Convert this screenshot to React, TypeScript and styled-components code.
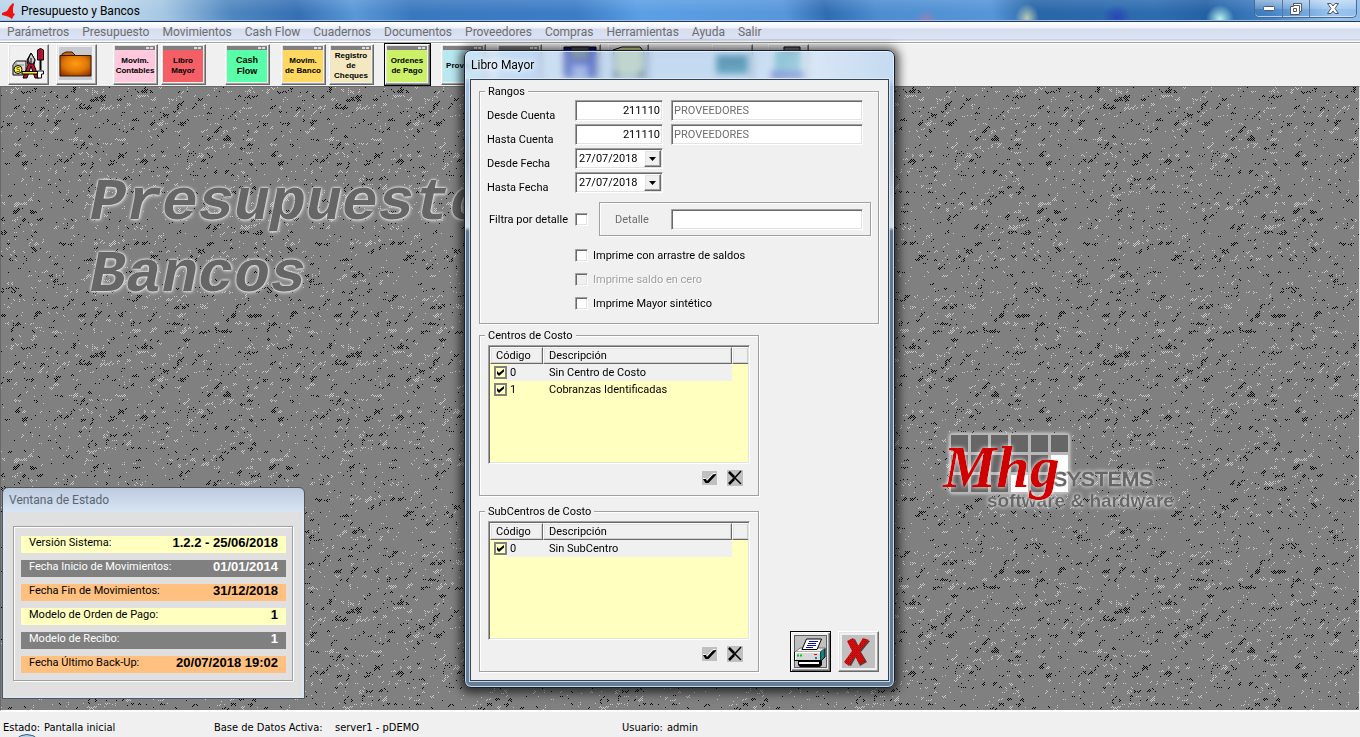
import React, { useMemo } from "react";
import styled, { createGlobalStyle, css } from "styled-components";

const SANS = '"Liberation Sans", Arial, sans-serif';
const FORM = 'Roboto, "Liberation Sans", sans-serif';
const UI = 'Roboto, "Open Sans", sans-serif';
const STATUS = '"DejaVu Sans Condensed", "DejaVu Sans", sans-serif';

const GlobalStyle = createGlobalStyle`
  *, *::before, *::after { box-sizing: border-box; }
  html, body { margin: 0; padding: 0; background: #f0f0f0; }
  body { font: 11px/13px ${FORM}; color: #000; overflow: hidden; }
  button, input, select { font: inherit; color: inherit; margin: 0; }
`;

/* ---------- Main window ---------- */

const Screen = styled.div`
  position: relative;
  display: flex;
  flex-direction: column;
  height: 100vh;
  overflow: hidden;
`;

const TitleBar = styled.header`
  display: flex;
  align-items: flex-start;
  justify-content: space-between;
  height: 22px;
  border-bottom: 1px solid #24395a;
  box-shadow: inset 0 -1px #9cc0e6;
  background:
    radial-gradient(ellipse 12px 12px at 926px 22px, #a080b0, transparent),
    radial-gradient(ellipse 12px 14px at 1027px 18px, #b9c9b4, transparent),
    radial-gradient(ellipse 14px 12px at 1117px 17px, #2a45b5, transparent),
    radial-gradient(ellipse 14px 14px at 1220px 19px, #baf5f0, transparent),
    linear-gradient(180deg, rgba(255, 255, 255, 0.12), transparent 60%),
    linear-gradient(75deg, #b7d3ea 0, #cfe1f0 80px, #a5c7e3 160px, #4f87c0 225px, #3670b4 290px, #5a98d8 345px,
      #3a78be 400px, #3d7dc6 560px, #5b9fe4 620px, #5796da 760px, #2f6cb2 800px, #4d8dd0 850px, #5595d8 960px,
      #2866a8 1000px, #2e6cb0 1120px, #2360a4 1170px, #4484c6 1230px, #9cc6f0 1290px, #8cbaea 100%);
`;

const AppTitle = styled.h1`
  display: flex;
  align-items: center;
  gap: 5px;
  margin: 0;
  padding-left: 2px;
  height: 22px;
  font: 400 12px/22px ${UI};
`;

const WindowButtons = styled.div`
  display: flex;
  margin-right: 3px;
  border: 1px solid #49698f;
  border-top: 0;
  border-radius: 0 0 5px 5px;
  box-shadow: inset 0 -1px rgba(255, 255, 255, 0.6);
  overflow: hidden;
`;

const WindowButton = styled.button<{ $wide?: boolean }>`
  display: flex;
  align-items: center;
  justify-content: center;
  width: ${(p) => (p.$wide ? 47 : 27)}px;
  height: 17px;
  padding: 0;
  border: 0;
  background: linear-gradient(rgba(255, 255, 255, 0.4), rgba(255, 255, 255, 0.15) 50%, transparent 51%);
  & + & { border-left: 1px solid #5577a0; }
`;

const MenuBar = styled.nav`
  display: flex;
  gap: 13px;
  height: 21px;
  padding-left: 7px;
  border-bottom: 1px solid #a0a0a0;
  background: linear-gradient(#fff 0, #eef2f9 6px, #d5dcee 7px, #dde4f5 17px, #b5bdd2 18px, #fff 19px);
`;

const MenuItem = styled.button`
  height: 20px;
  padding: 0;
  border: 0;
  background: none;
  color: #6d6d6d;
  font: 12px/20px ${UI};
`;

const ToolBar = styled.div`
  display: flex;
  align-items: flex-start;
  height: 43px;
  padding: 0 0 0 8px;
  border-top: 1px solid #fff;
  background: #f0f0f0;
`;

const raised = css`
  border: 1px solid;
  border-color: #fff #696969 #696969 #fff;
  box-shadow: inset -1px -1px #a0a0a0, inset 1px 1px #e3e3e3;
`;

const ToolButton = styled.button<{ $gap?: number; $wide?: boolean; $focused?: boolean }>`
  display: flex;
  flex: none;
  align-items: stretch;
  width: ${(p) => (p.$wide ? 45 : 41)}px;
  height: 41px;
  margin-left: ${(p) => p.$gap ?? 0}px;
  padding: 1px 2px 2px 1px;
  background: #f0f0f0;
  ${raised}
  ${(p) => p.$focused && css`outline: 1px solid #000; outline-offset: 0;`}
`;

const MiniWindow = styled.span<{ $color: string; $large?: boolean }>`
  display: flex;
  flex: 1;
  flex-direction: column;
  background: ${(p) => p.$color};
  font: 700 ${(p) => (p.$large ? "9px/11px" : "8px/10px")} ${SANS};
  text-align: center;
  white-space: pre-line;
  > span { margin: auto -4px; }
`;

const MiniBar = styled.i`
  display: flex;
  justify-content: flex-end;
  gap: 1px;
  height: 4px;
  padding: 1px 2px;
  background: #808080;
  &::before, &::after { content: ""; width: 3px; height: 2px; background: #ddd; }
`;

const Workspace = styled.main`
  position: relative;
  flex: 1;
  min-height: 0;
  border: 1px solid #696969;
  border-right-color: #e3e3e3;
  border-bottom-color: #fff;
  background: #808080;
  overflow: hidden;
`;

const Texture = styled.svg`
  position: absolute;
  inset: 0;
  width: 100%;
  height: 100%;
`;

const Watermark = styled.p`
  position: absolute;
  left: 89px;
  top: 80px;
  margin: 0;
  color: #666;
  font: italic 700 60px/72px "Liberation Mono", monospace;
  white-space: pre-line;
  text-shadow: 0 0 2px #fff, 0 0 3px #e0e0e0, 1px 1px 4px #d0d0d0;
`;

const BrandLogo = styled.svg`
  position: absolute;
  right: 178px;
  top: 330px;
  width: 244px;
  height: 100px;
  overflow: visible;
`;

const StatusBar = styled.footer`
  position: relative;
  display: flex;
  height: 26px;
  padding: 0 3px;
  border-top: 1px solid #fff;
  background: #f0f0f0;
  font: 11px/31px ${STATUS};
  overflow: hidden;
`;

const StatusItem = styled.dl<{ $width: number; $term?: number }>`
  display: flex;
  width: ${(p) => p.$width}px;
  margin: 0;
  dt { width: ${(p) => (p.$term ? p.$term + "px" : "auto")}; padding-right: 4px; white-space: nowrap; }
  dd { margin: 0; white-space: nowrap; }
`;

const StartOrb = styled.span`
  position: absolute;
  left: 11px;
  top: 22px;
  width: 32px;
  height: 32px;
  border: 1px solid #2c5a82;
  border-radius: 50%;
  background: #b5d2e6;
`;

/* ---------- Status window ---------- */

const StateWindow = styled.section`
  position: absolute;
  left: 2px;
  bottom: 38px;
  width: 303px;
  padding: 0 2px 2px;
  border: 1px solid #50555c;
  border-radius: 6px 6px 0 0;
  background: linear-gradient(#bccbde, #d9e7f6 26px, #dbe6f3);
`;

const StateTitle = styled.h2`
  margin: 0;
  padding-left: 4px;
  color: #5c6470;
  font: 400 12px/24px ${UI};
`;

const StateBody = styled.div`
  padding: 14px 9px 15px 8px;
  background: #e0e0e0;
`;

const StateList = styled.dl`
  display: flex;
  flex-direction: column;
  gap: 7px;
  margin: 0;
  padding: 9px 6px 7px 7px;
  border: 1px solid #a0a0a0;
  box-shadow: inset 1px 1px #fff, 1px 1px #fff;
`;

const StateRow = styled.div<{ $color: string; $inverse?: boolean }>`
  display: flex;
  justify-content: space-between;
  height: 17px;
  padding: 0 8px;
  background: ${(p) => p.$color};
  color: ${(p) => (p.$inverse ? "#fff" : "#000")};
  dt { line-height: 14px; }
  dd { margin: 0; font: 700 13px/14px ${SANS}; }
`;

/* ---------- Dialog ---------- */

const Dialog = styled.section`
  position: absolute;
  left: 464px;
  top: 50px;
  width: 431px;
  padding: 0 5px 6px;
  border: 1px solid #17202c;
  border-radius: 7px;
  background:
    linear-gradient(100deg, rgba(255, 255, 255, 0.35), transparent 30%, transparent 65%, rgba(255, 255, 255, 0.35) 80%, transparent) 0 0 / 100% 28px no-repeat,
    linear-gradient(rgba(160, 198, 240, 0.55) 0, rgba(168, 204, 242, 0.6) 28px, #a9c4e0 40px, #a8b4c2 110px, #d3dae2 176px, #607890 180px, #667f99);
  backdrop-filter: blur(3px);
  box-shadow: inset 0 0 0 1px rgba(235, 245, 255, 0.75), 0 1px 10px 4px rgba(0, 0, 0, 0.65);
`;

const DialogTitle = styled.h2`
  margin: 0;
  padding-left: 1px;
  font: 400 12px/28px ${UI};
  text-shadow: 0 0 6px #fff, 0 0 6px #fff;
`;

const DialogBody = styled.form`
  display: flex;
  flex-direction: column;
  padding: 5px 9px 8px 8px;
  border: 1px solid #36424f;
  outline: 1px solid rgba(225, 238, 250, 0.8);
  background: #f0f0f0;
`;

const Group = styled.fieldset<{ $narrow?: boolean; $after?: number }>`
  width: ${(p) => (p.$narrow ? "280px" : "auto")};
  min-width: 0;
  margin: 0 0 ${(p) => p.$after ?? 0}px;
  padding: ${(p) => (p.$narrow ? "3px 8px 9px" : "2px 7px 8px")};
  border: 1px solid #a0a0a0;
  box-shadow: 1px 1px #fff, inset 1px 1px #fff;
`;

const Legend = styled.legend<{ $indent?: number }>`
  margin-left: ${(p) => p.$indent ?? 0}px;
  padding: 0 3px;
  background: #f0f0f0;
`;

const FieldRow = styled.div`
  display: grid;
  grid-template-columns: 88px auto;
  justify-content: start;
  height: 24px;
  > label { padding-top: 9px; }
`;

const sunken = css`
  border: 1px solid;
  border-color: #a0a0a0 #fff #fff #a0a0a0;
  box-shadow: inset 1px 1px #696969, inset -1px -1px #e3e3e3;
  border-radius: 0;
`;

const AccountFields = styled.div`
  display: flex;
  gap: 8px;
`;

const TextBox = styled.input<{ $size: "code" | "name" }>`
  flex: none;
  width: ${(p) => (p.$size === "code" ? 88 : 192)}px;
  height: 21px;
  padding: 0 2px;
  ${sunken}
  outline: 0;
  background: #fff;
  text-align: ${(p) => (p.$size === "code" ? "right" : "left")};
  &:disabled { color: #6d6d6d; }
`;

const DateField = styled.div`
  display: grid;
  width: 88px;
  height: 21px;
  > * { grid-area: 1 / 1; }
`;

const DateSelect = styled.select`
  appearance: none;
  width: 100%;
  height: 100%;
  padding: 0 3px;
  ${sunken}
  outline: 0;
  background: #fff;
`;

const DropArrow = styled.span`
  z-index: 1;
  display: flex;
  align-items: center;
  justify-content: center;
  justify-self: end;
  width: 17px;
  height: 17px;
  margin: 2px;
  background: #f0f0f0;
  pointer-events: none;
  ${raised}
`;

const DetailRow = styled.div`
  display: grid;
  grid-template-columns: 88px 24px 272px;
  align-items: center;
  margin: 6px 0 7px;
  > label { padding-left: 2px; }
`;

const DetailFrame = styled.div`
  display: flex;
  align-items: center;
  justify-content: space-between;
  height: 34px;
  padding: 0 7px 0 15px;
  border: 1px solid #a0a0a0;
  box-shadow: 1px 1px #fff, inset 1px 1px #fff;
  color: #6d6d6d;
`;

const CheckBox = styled.input<{ $flat?: boolean }>`
  appearance: none;
  display: grid;
  flex: none;
  width: 13px;
  height: 13px;
  place-items: center;
  background: #fff;
  ${sunken}
  ${(p) => p.$flat && css`border: 2px solid #808080; box-shadow: none; background: none;`}
  &:disabled { background: #f0f0f0; }
  &:checked::after {
    content: "";
    width: 7px;
    height: 7px;
    background: #000;
    clip-path: polygon(0 29%, 29% 58%, 100% 0, 100% 36%, 29% 100%, 0 70%);
  }
`;

const OptionLabel = styled.label<{ $disabled?: boolean }>`
  display: flex;
  align-items: center;
  gap: 5px;
  height: 24px;
  margin-left: 88px;
  ${(p) => p.$disabled && css`color: #a0a0a0; text-shadow: 1px 1px #fff;`}
`;

const ListBox = styled.div`
  height: 119px;
  padding: 1px;
  ${sunken}
  background: #ffffc0;
`;

const ListTable = styled.table`
  width: 100%;
  border-collapse: separate;
  border-spacing: 0;
  table-layout: fixed;
  th {
    height: 17px;
    padding: 0 5px;
    border: 1px solid;
    border-color: #fff #696969 #696969 #fff;
    box-shadow: inset -1px -1px #d0d0d0, inset 1px 1px #e3e3e3;
    background: #f0f0f0;
    font-weight: 400;
    text-align: left;
  }
  th:last-child { border-right: 0; }
  td { height: 17px; padding: 0 6px; white-space: nowrap; }
  td:first-child { padding: 0 0 0 4px; }
`;

const ListRow = styled.tr<{ $selected?: boolean }>`
  ${(p) => p.$selected && css`
    td:first-child { background: linear-gradient(90deg, transparent 17px, #f0f0f0 17px); }
    td:nth-child(2) { background: #f0f0f0; }
  `}
`;

const CodeLabel = styled.label`
  display: flex;
  align-items: center;
  gap: 3px;
`;

const ListActions = styled.div`
  display: flex;
  justify-content: flex-end;
  gap: 9px;
  margin: 6px 7px 0 0;
`;

const GlyphButton = styled.button`
  display: block;
  width: 16px;
  height: 16px;
  padding: 0;
  border: 0;
  background: none;
  svg { display: block; }
`;

const BottomRow = styled.div`
  display: flex;
  align-items: flex-end;
  justify-content: space-between;
`;

const DialogActions = styled.div`
  display: flex;
  gap: 7px;
`;

const ActionButton = styled.button<{ $default?: boolean }>`
  display: flex;
  align-items: center;
  justify-content: center;
  width: 41px;
  height: 41px;
  padding: 0;
  background: #f0f0f0;
  ${raised}
  ${(p) => p.$default && css`border-color: #000; box-shadow: inset 1px 1px #fff, inset -1px -1px #696969, inset -2px -2px #a0a0a0;`}
  svg { flex: none; }
`;

/* ---------- Drawings ---------- */

const TILE = 256;

/** Embossed noise: lit pixels on the upper edge of each bump, black ones on the lower edge. */
function buildGrain() {
  let seed = 20180727;
  const rnd = () => {
    seed = (seed * 1664525 + 1013904223) >>> 0;
    return seed / 4294967296;
  };
  const make = (cell: number) => {
    const n = TILE / cell;
    const grid = Array.from({ length: n * n }, rnd);
    const ease = (t: number) => t * t * (3 - 2 * t);
    return (x: number, y: number) => {
      const gx = ((x + TILE) % TILE) / cell;
      const gy = ((y + TILE) % TILE) / cell;
      const x0 = Math.floor(gx), y0 = Math.floor(gy);
      const fx = ease(gx - x0), fy = ease(gy - y0);
      const at = (i: number, j: number) => grid[(j % n) * n + (i % n)];
      return (at(x0, y0) * (1 - fx) + at(x0 + 1, y0) * fx) * (1 - fy)
        + (at(x0, y0 + 1) * (1 - fx) + at(x0 + 1, y0 + 1) * fx) * fy;
    };
  };
  const coarse = make(8);
  const fine = make(4);
  const height = (x: number, y: number) => coarse(x, y) * 0.9 + fine(x + 2, y + 1) * 0.6;
  let light = "";
  let dark = "";
  for (let y = 0; y < TILE; y++) {
    for (let x = y % 2; x < TILE; x += 2) {
      const slope = height(x, y + 2) - height(x, y - 1)
        + (height(x + 1, y) - height(x - 1, y)) * 0.5 + (rnd() - 0.5) * 0.4;
      if (slope > 0.39) light += `M${x} ${y}h1v1h-1z`;
      else if (slope < -0.39) dark += `M${x} ${y}h1v1h-1z`;
    }
  }
  return { light, dark };
}

const Grain = () => {
  const { light, dark } = useMemo(buildGrain, []);
  return (
    <Texture aria-hidden="true" shapeRendering="crispEdges">
      <defs>
        <pattern id="grain" width={TILE} height={TILE} patternUnits="userSpaceOnUse">
          <path d={light} fill="#c8c8c8" />
          <path d={dark} fill="#000" />
        </pattern>
      </defs>
      <rect width="100%" height="100%" fill="url(#grain)" />
    </Texture>
  );
};

const BirdIcon = () => (
  <svg width="14" height="16" viewBox="0 0 14 16" aria-hidden="true">
    <path d="M11 0 12 1 11 5 11 10 13 11 11 14 10 16 7 14 4 13 0 12V10L5 8 8 3z" fill="#f01010" />
  </svg>
);

const ToolsIcon = () => (
  <svg width="36" height="36" viewBox="0 0 36 36" aria-hidden="true">
    <path d="M3 19 6 15h10v10l-2 4H3z" fill="#ddd" stroke="#000" />
    <path d="M6 15v4h-3M6 19h8" stroke="#888" fill="none" />
    <circle cx="8" cy="23.500" r="4" fill="#ff4" stroke="#000" />
    <path d="M9.500 21.500H7v2h2.500v2H6.500" stroke="#806000" fill="none" />
    <path d="M21 7 17 14l1 5-5 13h4l4-12 4 12h4l-5-13 1-5z" fill="#c01030" stroke="#000" />
    <path d="M21 7 18 14l2 4h3l2-4zM21 12v6" fill="#ccc" stroke="#000" />
    <path d="M12 25.500h18v2.500H12z" fill="#ee4" stroke="#000" />
    <path d="M27.500 4q3-3 6 0v10h-6z" fill="#d01020" stroke="#000" />
    <path d="M30 4v9" stroke="#402090" />
    <path d="M30.500 14v10" stroke="#000" strokeWidth="2" />
    <path d="M27.500 25h6v3h-2v4h-4z" fill="#fff" stroke="#000" />
  </svg>
);

const FolderIcon = () => (
  <svg width="36" height="36" viewBox="0 0 36 36" aria-hidden="true">
    <defs>
      <radialGradient id="folderFill" cx="0.5" cy="0.4" r="0.75">
        <stop offset="0" stopColor="#ff9c10" />
        <stop offset="0.5" stopColor="#e07808" />
        <stop offset="1" stopColor="#802800" />
      </radialGradient>
    </defs>
    <rect x="1" y="1" width="33" height="33" fill="#c8c8d0" />
    <path d="M4 10V8l4-2h6l3 3v2z" fill="#c06810" stroke="#3a1800" />
    <path d="M2 9.500h31v20.500H2z" fill="url(#folderFill)" stroke="#3a1800" />
  </svg>
);

const DiskIcon = ({ color }: { color: string }) => (
  <svg width="36" height="36" viewBox="0 0 36 36" aria-hidden="true">
    <path d="M2 1h32v31H5l-3-3z" fill={color} stroke="#000" />
    <path d="M9 1h18v12H9z" fill="#555" stroke="#111" />
    <path d="M10 19h16v13H10z" fill="#99c" />
  </svg>
);

const NoteIcon = () => (
  <svg width="36" height="36" viewBox="0 0 36 36" aria-hidden="true">
    <path d="M3 4 12 1h18l4 5v24H6z" fill="#e6e6a0" stroke="#000" />
    <path d="M3 24 10 32H3zM26 32l8-9v9z" fill="#222" />
  </svg>
);

const CardIcon = () => (
  <svg width="36" height="36" viewBox="0 0 36 36" aria-hidden="true">
    <path d="M2 9h32v19H2z" fill="#0f6f78" />
    <path d="M6 13h24v4H6z" fill="#0a4a56" />
  </svg>
);

const MachineIcon = () => (
  <svg width="36" height="36" viewBox="0 0 36 36" aria-hidden="true">
    <path d="M14 1h16v5H14z" fill="#777" stroke="#000" />
    <path d="M5 6h26v20H5z" fill="#3fa0a4" />
    <path d="M1 25h33v9H1z" fill="#2028a0" />
  </svg>
);

const TickGlyph = () => (
  <svg width="15" height="14" viewBox="0 0 15 14" aria-hidden="true">
    <rect width="15" height="14" fill="#c0c0c0" />
    <path d="M1 7.500h2.500l1.500 2L11 2.500h2.500" fill="none" stroke="#fff" />
    <path d="M1 8h3l1 2 6-6.500 3-.5v1L6.500 12H3.500z" fill="#000" />
  </svg>
);

const CrossGlyph = () => (
  <svg width="16" height="16" viewBox="0 0 16 16" aria-hidden="true">
    <rect width="16" height="16" fill="#c0c0c0" />
    <path d="M2 2 14 14M14 1 4 12" stroke="#000" strokeWidth="1.500" fill="none" />
    <path d="M2 2l5 5M7 9l-5 5" stroke="#000" strokeWidth="2.500" />
  </svg>
);

const PrinterIcon = () => (
  <svg width="35" height="35" viewBox="0 0 35 35" aria-hidden="true">
    <rect x="1" y="1" width="33" height="33" fill="#c0c0c0" />
    <rect x="1.500" y="1.500" width="32" height="32" fill="none" stroke="#000" strokeDasharray="1 1" />
    <path d="M5 27h24v4l-2 2H7l-2-2z" fill="#000" />
    <path d="M6 28h20v2H6z" fill="#fff" />
    <path d="M27 18 32 14v9l-4 4h-1z" fill="#108080" stroke="#000" />
    <path d="M2 18 7 14h25l-5 4z" fill="#f0f0f0" stroke="#777" />
    <path d="M2 18h25v8H2z" fill="#d8d8d8" />
    <path d="M2 18.500h25M2.500 18v8" stroke="#fff" />
    <path d="M1.500 18v8.500H27" stroke="#000" fill="none" />
    <path d="M9 15.500 13.500 5h15L24 15.500z" fill="#fff" stroke="#000" />
    <path d="M16 7.500h9M15 9.500h8M14 11.500h9M13 13.500h7" stroke="#1010a0" />
    <path d="M4 21.500h2M7 21.500h2" stroke="#0c0" strokeWidth="2" />
    <path d="M21 20.500h3" stroke="#f00" />
    <path d="M22 24h2" stroke="#088" strokeWidth="2" />
  </svg>
);

const CancelIcon = () => (
  <svg width="33" height="33" viewBox="0 0 33 33" aria-hidden="true">
    <defs>
      <pattern id="mesh" width="2" height="2" patternUnits="userSpaceOnUse">
        <rect width="2" height="2" fill="#f00808" />
        <rect width="1" height="1" fill="#801010" />
        <rect x="1" y="1" width="1" height="1" fill="#c01010" />
      </pattern>
    </defs>
    <rect width="33" height="33" fill="#c0c0c0" />
    <path d="M8 6 13 4 17 12 22 5 28 6 19 17 25 27 18 31 14 22 9 31 3 28 11 16z" fill="#444" />
    <path d="M5 6 11 3 16 11 21 3 27 5 18 16 24 27 17 29 13 21 7 31 2 27 10 16z" fill="url(#mesh)" />
  </svg>
);

const blocks: [number, number][] = [];
for (let r = 0; r < 3; r++) for (let c = 0; c < 6; c++) blocks.push([c, r]);
const whiteBlocks = ["5-1", "5-2", "3-2"];

const Logo = () => (
  <BrandLogo viewBox="0 0 244 100" role="img" aria-label="Mhg Systems software &amp; hardware">
    <defs>
      <filter id="halo" x="-10%" y="-10%" width="120%" height="120%">
        <feDropShadow dx="0" dy="0" stdDeviation="2" floodColor="#fff" floodOpacity="1" />
      </filter>
    </defs>
    <g filter="url(#halo)">
      <rect x="13" y="17" width="119" height="59" fill="#b8b8b8" />
      {blocks.map(([c, r]) => (
        <rect key={`${c}-${r}`} x={14 + c * 20} y={18 + r * 20} width="17" height="17"
          fill={whiteBlocks.includes(`${c}-${r}`) ? "#fff" : "#666"} />
      ))}
    </g>
    <g filter="url(#halo)" fill="#666" fontFamily={SANS}>
      <text x="116" y="69" fontSize="21" stroke="#666">SYSTEMS</text>
      <text x="50" y="90" fontSize="19" fontWeight="700">software &amp; hardware</text>
    </g>
    <g fill="#d00000" fontStyle="italic" fontWeight="700" fontFamily='"Liberation Serif", serif' filter="url(#halo)">
      <text x="6" y="70" fontSize="60">Mhg</text>
    </g>
  </BrandLogo>
);

/* ---------- Content ---------- */

const menus = ["Parámetros", "Presupuesto", "Movimientos", "Cash Flow", "Cuadernos", "Documentos",
  "Proveedores", "Compras", "Herramientas", "Ayuda", "Salir"];

const shortcuts = [
  { text: "Movim.\nContables", color: "#ffc8dc", gap: 16 },
  { text: "Libro\nMayor", color: "#f45f66", gap: 3 },
  { text: "Cash\nFlow", color: "#58ffa8", gap: 19, large: true },
  { text: "Movim.\nde Banco", color: "#ffd860", gap: 11 },
  { text: "Registro\nde\nCheques", color: "#f4e8c0", gap: 3 },
  { text: "Ordenes\nde Pago", color: "#ccf068", gap: 11, focused: true },
  { text: "Proveed.", color: "#b8e8f0", gap: 11 },
  { text: "", color: "#c8dcf0", gap: 11 },
];

const stateRows = [
  { label: "Versión Sistema:", value: "1.2.2 - 25/06/2018", color: "#ffffc0" },
  { label: "Fecha Inicio de Movimientos:", value: "01/01/2014", color: "#808080", inverse: true },
  { label: "Fecha Fin de Movimientos:", value: "31/12/2018", color: "#ffc080" },
  { label: "Modelo de Orden de Pago:", value: "1", color: "#ffffc0" },
  { label: "Modelo de Recibo:", value: "1", color: "#808080", inverse: true },
  { label: "Fecha Último Back-Up:", value: "20/07/2018 19:02", color: "#ffc080" },
];

const AccountRow = ({ id, label }: { id: string; label: string }) => (
  <FieldRow>
    <label htmlFor={id}>{label}</label>
    <AccountFields>
      <TextBox id={id} $size="code" defaultValue="211110" />
      <TextBox $size="name" defaultValue="PROVEEDORES" aria-label={`${label}, nombre`} disabled />
    </AccountFields>
  </FieldRow>
);

const DateRow = ({ id, label }: { id: string; label: string }) => (
  <FieldRow>
    <label htmlFor={id}>{label}</label>
    <DateField>
      <DateSelect id={id}><option>27/07/2018</option></DateSelect>
      <DropArrow>
        <svg width="7" height="4" viewBox="0 0 7 4" aria-hidden="true"><path d="M0 0h7L3.500 4z" /></svg>
      </DropArrow>
    </DateField>
  </FieldRow>
);

type Item = { code: string; name: string };

const CenterGroup = ({ title, items, after }: { title: string; items: Item[]; after?: number }) => (
  <Group $narrow $after={after}>
    <Legend $indent={-3}>{title}</Legend>
    <ListBox>
      <ListTable>
        <colgroup><col style={{ width: 53 }} /><col style={{ width: 189 }} /><col /></colgroup>
        <thead>
          <tr><th scope="col">Código</th><th scope="col">Descripción</th><th aria-hidden="true" /></tr>
        </thead>
        <tbody>
          {items.map((item, i) => (
            <ListRow key={item.code} $selected={i === 0}>
              <td><CodeLabel><CheckBox type="checkbox" $flat defaultChecked />{item.code}</CodeLabel></td>
              <td>{item.name}</td>
              <td />
            </ListRow>
          ))}
        </tbody>
      </ListTable>
    </ListBox>
    <ListActions>
      <GlyphButton type="button" aria-label="Marcar todos"><TickGlyph /></GlyphButton>
      <GlyphButton type="button" aria-label="Desmarcar todos"><CrossGlyph /></GlyphButton>
    </ListActions>
  </Group>
);

export default function App() {
  return (
    <Screen>
      <GlobalStyle />
      <TitleBar>
        <AppTitle><BirdIcon />Presupuesto y Bancos</AppTitle>
        <WindowButtons>
          <WindowButton aria-label="Minimizar">
            <svg width="12" height="5" viewBox="0 0 12 5"><rect x=".5" y=".5" width="11" height="4" rx="1" fill="#fff" stroke="#50586a" /></svg>
          </WindowButton>
          <WindowButton aria-label="Restaurar">
            <svg width="12" height="12" viewBox="0 0 12 12">
              <path d="M3.500.5h8v8h-2v3h-9v-8h3z" fill="#fff" stroke="#50586a" />
              <path d="M3.500 5.500h3v3h-3zM3 2.500h6.500V8" fill="none" stroke="#50586a" />
            </svg>
          </WindowButton>
          <WindowButton aria-label="Cerrar" $wide>
            <svg width="12" height="11" viewBox="0 0 12 11">
              <path d="M.5.5h3.500L6 3 8 .5h3.500L8 5.500l3.500 5H8L6 8l-2 2.500H.5L4 5.500z" fill="#fff" stroke="#50586a" />
            </svg>
          </WindowButton>
        </WindowButtons>
      </TitleBar>

      <MenuBar>{menus.map((m) => <MenuItem key={m}>{m}</MenuItem>)}</MenuBar>

      <ToolBar>
        <ToolButton aria-label="Herramientas"><ToolsIcon /></ToolButton>
        <ToolButton aria-label="Carpeta" $gap={7}><FolderIcon /></ToolButton>
        {shortcuts.map((s) => (
          <ToolButton key={s.color} $wide $gap={s.gap} $focused={s.focused}>
            <MiniWindow $color={s.color} $large={s.large}><MiniBar /><span>{s.text}</span></MiniWindow>
          </ToolButton>
        ))}
        <ToolButton aria-label="Guardar" $gap={18}><DiskIcon color="#1010a0" /></ToolButton>
        <ToolButton aria-label="Notas" $gap={7}><NoteIcon /></ToolButton>
        <ToolButton aria-label="Tarjetas" $gap={63}><CardIcon /></ToolButton>
        <ToolButton aria-label="Terminal" $gap={15}><MachineIcon /></ToolButton>
      </ToolBar>

      <Workspace>
        <Grain />
        <Watermark>{"Presupuesto y\nBancos"}</Watermark>
        <Logo />
      </Workspace>

      <StateWindow>
        <StateTitle>Ventana de Estado</StateTitle>
        <StateBody>
          <StateList>
            {stateRows.map((r) => (
              <StateRow key={r.label} $color={r.color} $inverse={r.inverse}>
                <dt>{r.label}</dt><dd>{r.value}</dd>
              </StateRow>
            ))}
          </StateList>
        </StateBody>
      </StateWindow>

      <StatusBar>
        <StatusItem $width={211}><dt>Estado:</dt><dd>Pantalla inicial</dd></StatusItem>
        <StatusItem $width={408} $term={121}><dt>Base de Datos Activa:</dt><dd>server1 - pDEMO</dd></StatusItem>
        <StatusItem $width={120}><dt>Usuario:</dt><dd>admin</dd></StatusItem>
        <StartOrb />
      </StatusBar>

      <Dialog role="dialog" aria-labelledby="dialog-title">
        <DialogTitle id="dialog-title">Libro Mayor</DialogTitle>
        <DialogBody>
          <Group $after={5}>
            <Legend $indent={-2}>Rangos</Legend>
            <AccountRow id="desde-cuenta" label="Desde Cuenta" />
            <AccountRow id="hasta-cuenta" label="Hasta Cuenta" />
            <DateRow id="desde-fecha" label="Desde Fecha" />
            <DateRow id="hasta-fecha" label="Hasta Fecha" />
            <DetailRow>
              <label htmlFor="filtra">Filtra por detalle</label>
              <CheckBox id="filtra" type="checkbox" />
              <DetailFrame>
                <label htmlFor="detalle">Detalle</label>
                <TextBox id="detalle" $size="name" disabled />
              </DetailFrame>
            </DetailRow>
            <OptionLabel><CheckBox type="checkbox" />Imprime con arrastre de saldos</OptionLabel>
            <OptionLabel $disabled><CheckBox type="checkbox" disabled />Imprime saldo en cero</OptionLabel>
            <OptionLabel><CheckBox type="checkbox" />Imprime Mayor sintético</OptionLabel>
          </Group>
          <CenterGroup title="Centros de Costo" after={9}
            items={[{ code: "0", name: "Sin Centro de Costo" }, { code: "1", name: "Cobranzas Identificadas" }]} />
          <BottomRow>
            <CenterGroup title="SubCentros de Costo" items={[{ code: "0", name: "Sin SubCentro" }]} />
            <DialogActions>
              <ActionButton type="button" aria-label="Imprimir" $default><PrinterIcon /></ActionButton>
              <ActionButton type="button" aria-label="Cancelar"><CancelIcon /></ActionButton>
            </DialogActions>
          </BottomRow>
        </DialogBody>
      </Dialog>
    </Screen>
  );
}
